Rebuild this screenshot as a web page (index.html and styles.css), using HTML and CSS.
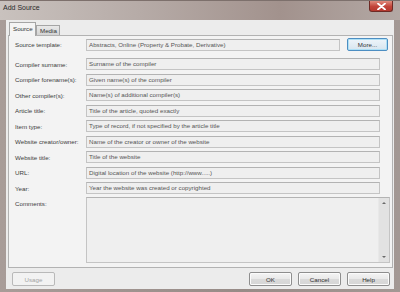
FILE: index.html
```html
<!DOCTYPE html>
<html lang="en">

<head>
  <meta charset="UTF-8">
  <title>Add Source</title>
  <link rel="stylesheet" href="styles.css">
</head>

<body>
  <div class="window">
    <div class="titlebar">
      <span class="title">Add Source</span>
      <div class="close">
        <svg width="9" height="7" viewBox="0 0 9 7">
          <path d="M1 0.5 L8 6.5 M8 0.5 L1 6.5" stroke="#fff" stroke-width="1.8" stroke-linecap="round"/>
        </svg>
      </div>
    </div>

    <div class="client">
      <div class="tabs">
        <span class="tab active">Source</span>
        <span class="tab">Media</span>
      </div>

      <div class="panel">
        <div class="template-row">
          <label class="label">Source template:</label>
          <div class="field">Abstracts, Online (Property &amp; Probate, Derivative)</div>
          <button class="btn more">More...</button>
        </div>

        <div class="fields">
          <label class="label">Compiler surname:</label>
          <div class="field">Surname of the compiler</div>
          <label class="label">Compiler forename(s):</label>
          <div class="field">Given name(s) of the compiler</div>
          <label class="label">Other compiler(s):</label>
          <div class="field">Name(s) of additional compiler(s)</div>
          <label class="label">Article title:</label>
          <div class="field">Title of the article, quoted exactly</div>
          <label class="label">Item type:</label>
          <div class="field">Type of record, if not specified by the article title</div>
          <label class="label">Website creator/owner:</label>
          <div class="field">Name of the creator or owner of the website</div>
          <label class="label">Website title:</label>
          <div class="field">Title of the website</div>
          <label class="label">URL:</label>
          <div class="field">Digital location of the website (http://www.....)</div>
          <label class="label">Year:</label>
          <div class="field">Year the website was created or copyrighted</div>
        </div>

        <div class="comments-row">
          <label class="label">Comments:</label>
          <div class="textarea">
            <div class="scrollbar">
              <span class="arrow up"></span>
              <span class="arrow down"></span>
            </div>
          </div>
        </div>
      </div>

      <div class="footer">
        <button class="btn disabled">Usage</button>
        <span class="spacer"></span>
        <button class="btn">OK</button>
        <button class="btn">Cancel</button>
        <button class="btn">Help</button>
      </div>
    </div>
  </div>
</body>

</html>
```

FILE: styles.css
```css
body {
  margin: 0;
  background-color: #9d928e;
  font-family: "Liberation Sans", Arial, sans-serif;
  font-size: 6.2px;
}

.window {
  width: 400px;
  height: 292px;
  display: flex;
  flex-direction: column;
  background: linear-gradient(90deg, #a89c98 0%, #978b87 60%, #a39894 100%);
}

.titlebar {
  height: 20px;
  display: flex;
  align-items: flex-start;
  justify-content: space-between;
  background: linear-gradient(90deg, #c9c2be 0%, #b6aba7 35%, #a2928d 70%, #b3a8a4 100%);
  border-top: 1px solid #7d706c;
  box-sizing: border-box;
}

.title {
  color: #2a2a2a;
  font-size: 7px;
  margin: 3px 0 0 3px;
}

.close {
  width: 22px;
  height: 10px;
  margin-right: 7px;
  display: flex;
  align-items: center;
  justify-content: center;
  background: linear-gradient(#e08d7e, #c2453a 55%, #b3382e);
  border: 1px solid #6e2a25;
  border-top: none;
  border-radius: 0 0 3px 3px;
}

.client {
  flex: 1;
  margin: 0 6px 3px 6px;
  padding: 2px 1px 0 2px;
  background-color: #ececec;
  display: flex;
  flex-direction: column;
}

.tabs {
  display: flex;
  align-items: flex-end;
  height: 13px;
  padding-left: 1px;
}

.tab {
  height: 11px;
  line-height: 11px;
  padding: 0 3px;
  color: #333;
  border: 1px solid #a5a5a5;
  border-bottom: none;
  background: linear-gradient(#e9e9e9, #d3d3d3);
  box-sizing: border-box;
  height: 10px;
  line-height: 9px;
  width: 24px;
}

.tab.active {
  height: 14px;
  line-height: 12px;
  width: 27px;
  margin-bottom: -1px;
  background: #f4f4f4;
  position: relative;
  z-index: 1;
}

.panel {
  height: 233px;
  box-sizing: border-box;
  border: 1px solid #b2b2b2;
  background-color: #f3f3f3;
  padding: 2px 0 4px 6px;
  display: flex;
  flex-direction: column;
}

.label {
  color: #3c3c3c;
  width: 71px;
  flex: none;
  white-space: nowrap;
}

.field {
  height: 12px;
  line-height: 10px;
  box-sizing: border-box;
  border: 1px solid #c4c4c4;
  border-top-color: #b3b3b3;
  background-color: #efefef;
  color: #555;
  padding-left: 2px;
  white-space: nowrap;
  overflow: hidden;
}

.template-row {
  display: flex;
  align-items: center;
  margin-right: 4px;
}

.template-row .field {
  flex: 1;
}

.fields {
  display: grid;
  grid-template-columns: 71px 1fr;
  align-items: center;
  row-gap: 3.5px;
  margin-top: 7px;
  margin-right: 12px;
}

.comments-row {
  flex: 1;
  display: flex;
  margin-top: 3px;
  margin-right: 2px;
}

.comments-row .label {
  padding-top: 3px;
}

.textarea {
  flex: 1;
  display: flex;
  justify-content: flex-end;
  border: 1px solid #c4c4c4;
  border-top-color: #b3b3b3;
  background-color: #efefef;
}

.scrollbar {
  width: 10px;
  background-color: #e2e2e2;
  border-left: 1px solid #e8e8e8;
  display: flex;
  flex-direction: column;
  justify-content: space-between;
  align-items: center;
  padding: 4px 0;
}

.arrow {
  width: 0;
  height: 0;
  border-left: 2px solid transparent;
  border-right: 2px solid transparent;
}

.arrow.up {
  border-bottom: 2px solid #6a6a6a;
}

.arrow.down {
  border-top: 2px solid #6a6a6a;
}

.btn {
  font-family: inherit;
  font-size: 6.2px;
  color: #333;
  height: 14px;
  width: 43px;
  padding: 0;
  border: 1px solid #8e8e8e;
  border-radius: 2px;
  background: linear-gradient(#f4f4f4 0%, #e9e9e9 50%, #dadada 51%, #d6d6d6 100%);
  box-shadow: inset 0 0 0 1px #fbfbfb;
}

.btn.more {
  width: 41px;
  height: 13px;
  margin-left: 7px;
  border-color: #4d8ec2;
  box-shadow: inset 0 0 0 1px #aee0f6;
  background: linear-gradient(#eef5fa, #d7e5ef);
}

.btn.disabled {
  color: #a3a3a3;
  border-color: #b9b9b9;
  background: #f2f2f2;
  box-shadow: none;
}

.footer {
  display: flex;
  align-items: center;
  gap: 6px;
  padding: 4px 3px 2px 4px;
}

.spacer {
  flex: 1;
}
```
